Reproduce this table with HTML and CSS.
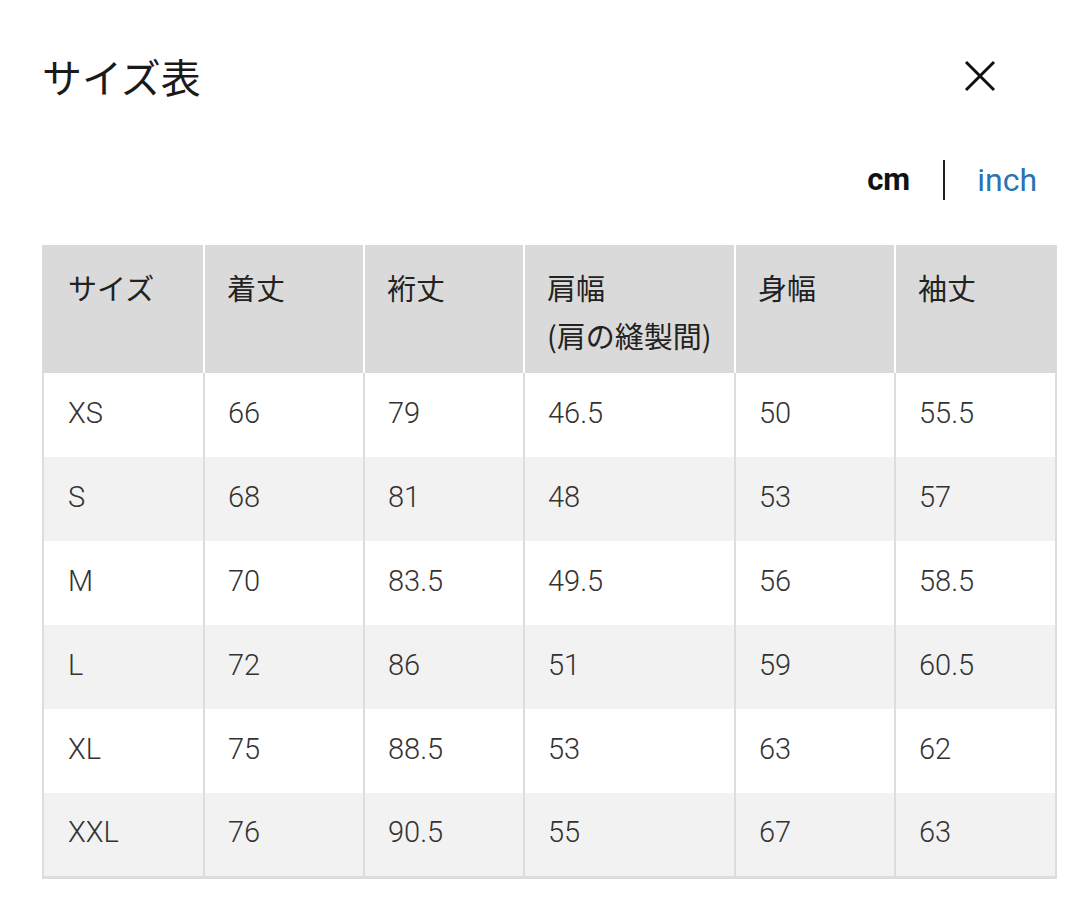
FILE: index.html
```html
<!DOCTYPE html>
<html lang="ja">
<head>
<meta charset="utf-8">
<link rel="stylesheet" href="styles.css">
</head>
<body>
<div class="page">
  <div class="top">
    <h1 class="title">サイズ表</h1>
    <button class="close" aria-label="close">
      <svg width="32" height="32" viewBox="0 0 32 32"><path d="M2 2 L30 30 M30 2 L2 30" stroke="#111" stroke-width="3" fill="none"/></svg>
    </button>
  </div>
  <div class="units">
    <span class="unit active">cm</span>
    <span class="sep"></span>
    <span class="unit link">inch</span>
  </div>
  <table class="size-table">
    <colgroup>
      <col class="c1"><col class="c2"><col class="c3"><col class="c4"><col class="c5"><col class="c6">
    </colgroup>
    <thead>
      <tr>
        <th>サイズ</th><th>着丈</th><th>裄丈</th><th>肩幅<br>(肩の縫製間)</th><th>身幅</th><th>袖丈</th>
      </tr>
    </thead>
    <tbody>
      <tr><td>XS</td><td>66</td><td>79</td><td>46.5</td><td>50</td><td>55.5</td></tr>
      <tr><td>S</td><td>68</td><td>81</td><td>48</td><td>53</td><td>57</td></tr>
      <tr><td>M</td><td>70</td><td>83.5</td><td>49.5</td><td>56</td><td>58.5</td></tr>
      <tr><td>L</td><td>72</td><td>86</td><td>51</td><td>59</td><td>60.5</td></tr>
      <tr><td>XL</td><td>75</td><td>88.5</td><td>53</td><td>63</td><td>62</td></tr>
      <tr><td>XXL</td><td>76</td><td>90.5</td><td>55</td><td>67</td><td>63</td></tr>
    </tbody>
  </table>
</div>
</body>
</html>
```

FILE: styles.css
```css
html, body {
  margin: 0;
  padding: 0;
  background: #fff;
}
body {
  font-family: Roboto, "Noto Sans CJK JP", sans-serif;
  color: #222;
}
.page {
  width: 1080px;
  padding: 0 25px 0 42px;
  box-sizing: border-box;
}
.top {
  display: flex;
  align-items: center;
  justify-content: space-between;
  height: 152px;
  padding-right: 59px;
  box-sizing: border-box;
}
.title {
  margin: 0;
  font-family: "Noto Sans CJK JP", sans-serif;
  font-weight: 400;
  font-size: 40px;
  line-height: 56px;
  color: #1a1a1a;
}
.close {
  border: 0;
  background: none;
  padding: 0;
  width: 32px;
  height: 32px;
  display: block;
}
.close svg { display: block; }
.units {
  display: flex;
  justify-content: flex-end;
  align-items: center;
  height: 56px;
  margin-bottom: 37px;
  padding-right: 18px;
}
.unit {
  font-size: 32px;
  line-height: 40px;
}
.unit.active {
  font-weight: 700;
  color: #111;
  font-size: 31px;
}
.unit.link {
  color: #2a73b4;
  font-weight: 400;
}
.sep {
  width: 2px;
  height: 40px;
  background: #222;
  margin: 0 32px 0 33px;
}
.size-table {
  width: 1013px;
  border-collapse: collapse;
  table-layout: fixed;
}
.c1 { width: 161px; }
.c2 { width: 160px; }
.c3 { width: 160px; }
.c4 { width: 211px; }
.c5 { width: 160px; }
.c6 { width: 161px; }
.size-table th {
  background: #dadada;
  text-align: left;
  vertical-align: top;
  font-family: "Noto Sans CJK JP", sans-serif;
  font-weight: 400;
  font-size: 29px;
  line-height: 48px;
  color: #222;
  height: 128px;
  box-sizing: border-box;
  padding: 18px 0 0 22px;
  border-left: 2px solid #fff;
  border-right: 2px solid #fff;
}
.size-table th:first-child { border-left: 2px solid #dadada; padding-left: 24px; }
.size-table th:last-child { border-right: 2px solid #dadada; }
.size-table td {
  height: 84px;
  box-sizing: border-box;
  padding: 0 0 4px 23px;
  font-family: Roboto, "Noto Sans CJK JP", sans-serif;
  font-weight: 300;
  font-size: 29px;
  color: #333;
  border-left: 2px solid #dddddd;
  border-right: 2px solid #dddddd;
}
.size-table td:first-child { padding-left: 24px; }
.size-table tbody tr:nth-child(even) td { background: #f2f2f2; }
.size-table tbody tr:last-child td { border-bottom: 3px solid #dddddd; }
```
